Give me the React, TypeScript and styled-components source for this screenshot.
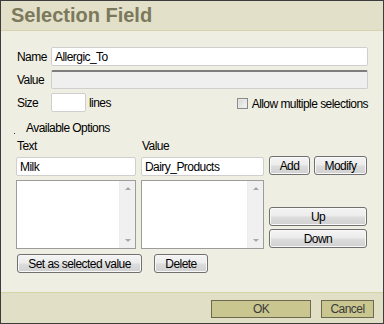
import React from 'react';
import styled, { createGlobalStyle } from 'styled-components';

const GlobalStyle = createGlobalStyle`
  body {
    margin: 0;
    font-family: "Liberation Sans", Arial, sans-serif;
  }
`;

const Dialog = styled.div`
  width: 384px;
  height: 324px;
  box-sizing: border-box;
  border: 1px solid #3c3c3c;
  background: #efeee2;
  display: flex;
  flex-direction: column;
  font-size: 12px;
  color: #000;
  letter-spacing: -0.55px;
`;

const Header = styled.div`
  height: 29px;
  flex: none;
  background: #e2e0c8;
  border-bottom: 1px solid #d6d3ad;
  display: flex;
  align-items: center;
  padding-left: 10px;
`;

const Title = styled.h1`
  margin: 0;
  font-size: 20px;
  font-weight: bold;
  letter-spacing: 0;
  color: #7b785c;
`;

const Body = styled.div`
  flex: 1;
  padding: 16px 15px 0 15px;
  display: flex;
  flex-direction: column;
`;

const FormGrid = styled.div`
  display: grid;
  grid-template-columns: 35px 1fr;
  row-gap: 4px;
  align-items: center;
`;

const Label = styled.label`
  padding-left: 1px;
  white-space: nowrap;
`;

const TextBox = styled.div<{ $w?: number; $disabled?: boolean }>`
  height: 19px;
  box-sizing: border-box;
  width: ${(p) => (p.$w ? `${p.$w}px` : '100%')};
  background: ${(p) => (p.$disabled ? '#efefef' : '#fff')};
  border: 1px solid #cfcfcf;
  border-top: ${(p) => (p.$disabled ? '2px solid #7d7d7d' : '1px solid #cfcfcf')};
  border-radius: 2px;
  padding: 0 3px;
  display: flex;
  align-items: center;
  white-space: nowrap;
  overflow: hidden;
`;

const SizeRow = styled.div`
  display: flex;
  align-items: center;
`;

const Lines = styled.span`
  margin-left: 3px;
`;

const CheckWrap = styled.label`
  margin-left: auto;
  display: flex;
  align-items: center;
  gap: 4px;
  padding-top: 2px;
`;

const CheckBox = styled.span`
  width: 11px;
  height: 11px;
  box-sizing: border-box;
  border: 1px solid #8a8a8a;
  background: linear-gradient(135deg, #d4d4d4, #f6f6f6);
  box-shadow: inset 0 0 0 1px #e8e8e8;
`;

const SectionTitle = styled.div`
  position: relative;
  margin: 9px 0 0 10px;
`;

const Dot = styled.span`
  position: absolute;
  left: -12px;
  top: 12px;
  width: 1px;
  height: 1px;
  background: #333;
`;

const OptionsGrid = styled.div`
  margin-top: 4px;
  display: grid;
  grid-template-columns: 120px 123px 1fr;
  column-gap: 5px;
  grid-template-rows: 14px 19px 69px;
  row-gap: 4px;
  padding-right: 1px;
`;

const ColLabel = styled.div`
  align-self: end;
  line-height: 14px;
  padding-left: 1px;
`;

const ButtonPair = styled.div`
  display: flex;
  justify-content: space-between;
  margin-top: -1px;
`;

const Button = styled.button<{ $w?: number }>`
  height: 19px;
  width: ${(p) => (p.$w ? `${p.$w}px` : '100%')};
  box-sizing: border-box;
  padding: 0;
  font-family: inherit;
  font-size: 12px;
  letter-spacing: -0.55px;
  color: #000;
  border: 1px solid #707070;
  border-radius: 3px;
  background: linear-gradient(#f4f4f4 0%, #ececec 45%, #dcdcdc 55%, #d0d0d0 100%);
  box-shadow: inset 0 0 0 1px #f8f8f8;
`;

const ListBox = styled.div`
  box-sizing: border-box;
  border: 1px solid #9c9c9c;
  background: #fff;
  display: flex;
  justify-content: flex-end;
`;

const ScrollBar = styled.div`
  width: 15px;
  background: #f0f0f0;
  border-left: 1px solid #ececec;
  display: flex;
  flex-direction: column;
  justify-content: space-between;
  align-items: center;
  padding: 6px 0;
`;

const Arrow = styled.span<{ $down?: boolean }>`
  width: 0;
  height: 0;
  border-left: 3px solid transparent;
  border-right: 3px solid transparent;
  ${(p) => (p.$down ? 'border-top: 3px solid #a8a8a8;' : 'border-bottom: 3px solid #a8a8a8;')}
`;

const SideButtons = styled.div`
  display: flex;
  flex-direction: column;
  justify-content: flex-end;
  gap: 3px;
  padding-bottom: 1px;
`;

const BottomRow = styled.div`
  margin-top: 5px;
  display: flex;
  gap: 12px;
  padding-left: 1px;
`;

const Footer = styled.div`
  height: 30px;
  flex: none;
  background: #e1dfc6;
  border-top: 1px solid #d6d2a6;
  display: flex;
  justify-content: flex-end;
  align-items: center;
  gap: 10px;
  padding-right: 9px;
`;

const FooterButton = styled.button<{ $w: number }>`
  width: ${(p) => p.$w}px;
  height: 18px;
  box-sizing: border-box;
  padding: 0;
  margin-top: 1px;
  font-family: inherit;
  font-size: 12px;
  letter-spacing: -0.55px;
  color: #3a3a3a;
  background: #c9c68f;
  border: 1px solid #6b6a50;
`;

const Scrolled = () => (
  <ListBox>
    <ScrollBar>
      <Arrow />
      <Arrow $down />
    </ScrollBar>
  </ListBox>
);

export default function App() {
  return (
    <>
      <GlobalStyle />
      <Dialog>
        <Header>
          <Title>Selection Field</Title>
        </Header>
        <Body>
          <FormGrid>
            <Label>Name</Label>
            <TextBox>Allergic_To</TextBox>
            <Label>Value</Label>
            <TextBox $disabled />
            <Label>Size</Label>
            <SizeRow>
              <TextBox $w={35} />
              <Lines>lines</Lines>
              <CheckWrap>
                <CheckBox />
                Allow multiple selections
              </CheckWrap>
            </SizeRow>
          </FormGrid>
          <SectionTitle>
            <Dot />
            Available Options
          </SectionTitle>
          <OptionsGrid>
            <ColLabel>Text</ColLabel>
            <ColLabel>Value</ColLabel>
            <div />
            <TextBox>Milk</TextBox>
            <TextBox>Dairy_Products</TextBox>
            <ButtonPair>
              <Button $w={41}>Add</Button>
              <Button $w={53}>Modify</Button>
            </ButtonPair>
            <Scrolled />
            <Scrolled />
            <SideButtons>
              <Button>Up</Button>
              <Button>Down</Button>
            </SideButtons>
          </OptionsGrid>
          <BottomRow>
            <Button $w={125}>Set as selected value</Button>
            <Button $w={54}>Delete</Button>
          </BottomRow>
        </Body>
        <Footer>
          <FooterButton $w={100}>OK</FooterButton>
          <FooterButton $w={53}>Cancel</FooterButton>
        </Footer>
      </Dialog>
    </>
  );
}
